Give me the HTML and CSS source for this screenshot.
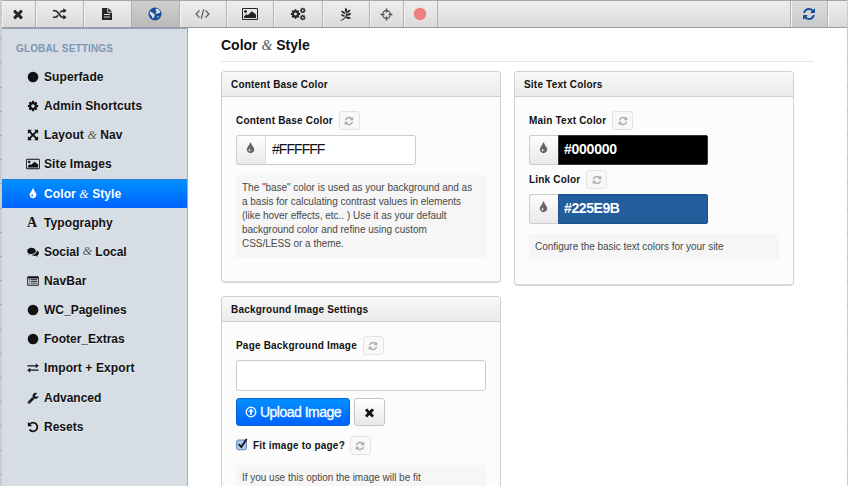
FILE: index.html
```html
<!DOCTYPE html>
<html lang="en">
<head>
<meta charset="utf-8">
<title>Color &amp; Style</title>
<link rel="stylesheet" href="styles.css">
</head>
<body>
<svg class="sprite" aria-hidden="true">
  <symbol id="close" viewBox="0 0 1792 1792"><path d="M1490 1322q0 40-28 68l-136 136q-28 28-68 28t-68-28l-294-294-294 294q-28 28-68 28t-68-28l-136-136q-28-28-28-68t28-68l294-294-294-294q-28-28-28-68t28-68l136-136q28-28 68-28t68 28l294 294 294-294q28-28 68-28t68 28l136 136q28 28 28 68t-28 68l-294 294 294 294q28 28 28 68z"/></symbol>
  <symbol id="refresh" viewBox="0 0 1792 1792"><path d="M1639 1056q0 5-1 7-64 268-268 434.500t-478 166.500q-146 0-282.500-55t-243.500-157l-129 129q-19 19-45 19t-45-19-19-45v-448q0-26 19-45t45-19h448q26 0 45 19t19 45-19 45l-137 137q71 66 161 102t187 36q134 0 250-65t186-179q11-17 53-117 8-23 30-23h192q13 0 22.500 9.500t9.500 22.500zm25-800v448q0 26-19 45t-45 19h-448q-26 0-45-19t-19-45 19-45l138-138q-148-137-349-137-134 0-250 65t-186 179q-11 17-53 117-8 23-30 23h-199q-13 0-22.500-9.500t-9.500-22.500v-7q65-268 270-434.500t480-166.500q146 0 284 55.500t245 156.500l130-129q19-19 45-19t45 19 19 45z"/></symbol>
  <symbol id="tint" viewBox="0 0 1792 1792"><path d="M896 1152q0-36-20-69-1-1-15.500-22.500t-25.500-38-25-44-21-50.500q-4-16-21-16t-21 16q-7 23-21 50.500t-25 44-25.500 38-15.500 22.500q-20 33-20 69 0 53 37.500 90.500t90.500 37.500 90.500-37.500 37.500-90.500zm512-128q0 212-150 362t-362 150-362-150-150-362q0-145 81-275 6-9 62.500-90.500t101-151 99.500-178 83-201.500q9-30 34-47t51-17 51.500 17 33.500 47q28 93 83 201.500t99.500 178 101 151 62.500 90.500q81 127 81 275z"/></symbol>
  <symbol id="picture" viewBox="-64 0 2048 1792"><path d="M576 576q0 80-56 136t-136 56-136-56-56-136 56-136 136-56 136 56 56 136zm1152 384v448h-1536v-192l320-320 160 160 512-512zm96-704h-1728q-13 0-22.500 9.500t-9.500 22.500v1216q0 13 9.500 22.500t22.500 9.500h1728q13 0 22.500-9.500t9.500-22.500v-1216q0-13-9.500-22.500t-22.500-9.500zm160 32v1216q0 66-47 113t-113 47h-1728q-66 0-113-47t-47-113v-1216q0-66 47-113t113-47h1728q66 0 113 47t47 113z"/></symbol>
  <symbol id="cog" viewBox="0 0 1792 1792"><path d="M1152 896q0-106-75-181t-181-75-181 75-75 181 75 181 181 75 181-75 75-181zm512-109v222q0 12-8 23t-20 13l-185 28q-19 54-39 91 35 50 107 138 10 12 10 25t-9 23q-27 37-99 108t-94 71q-12 0-26-9l-138-108q-44 23-91 38-16 136-29 186-7 28-36 28h-222q-14 0-24.500-8.500t-11.500-21.500l-28-184q-49-16-90-37l-141 107q-10 9-25 9-14 0-25-11-126-114-165-168-7-10-7-23 0-12 8-23 15-21 51-66.500t54-70.500q-27-50-41-99l-183-27q-13-2-21-12.500t-8-23.500v-222q0-12 8-23t19-13l186-28q14-46 39-92-40-57-107-138-10-12-10-24 0-10 9-23 26-36 98.500-107.500t94.500-71.500q13 0 26 10l138 107q44-23 91-38 16-136 29-186 7-28 36-28h222q14 0 24.500 8.500t11.500 21.500l28 184q49 16 90 37l142-107q9-9 24-9 13 0 25 10 129 119 165 170 7 8 7 22 0 12-8 23-15 21-51 66.500t-54 70.500q26 50 41 98l183 28q13 2 21 12.500t8 23.500z"/></symbol>
  <symbol id="undo" viewBox="0 0 1792 1792"><path d="M1664 896q0 156-61 298t-164 245-245 164-298 61q-172 0-327-72.500t-264-204.500q-7-10-6.500-22.500t8.500-20.500l137-138q10-9 25-9 16 2 23 12 73 95 179 147t225 52q104 0 198.500-40.500t163.500-109.500 109.500-163.500 40.500-198.500-40.500-198.500-109.500-163.500-163.500-109.500-198.500-40.500q-98 0-188 35.500t-160 101.500l137 138q31 30 14 69-17 40-59 40h-448q-26 0-45-19t-19-45v-448q0-42 40-59 39-17 69 14l130 129q107-101 244.500-156.500t284.500-55.500q156 0 298 61t245 164 164 245 61 298z"/></symbol>
  <symbol id="wrench" viewBox="0 0 1792 1792"><path d="M448 1472q0-26-19-45t-45-19-45 19-19 45 19 45 45 19 45-19 19-45zm644-420l-682 682q-37 37-90 37-52 0-91-37l-106-108q-38-36-38-90 0-53 38-91l681-681q39 98 114.500 173.500t173.500 114.500zm634-435q0 39-23 106-47 134-164.500 217.500t-258.500 83.500q-185 0-316.500-131.500t-131.500-316.500 131.500-316.500 316.500-131.500q58 0 121.500 16.500t107.500 46.500q16 11 16 28t-16 28l-293 169v224l193 107q5-3 79-48.500t135.500-81 70.500-35.500q15 0 23.500 10t8.500 25z"/></symbol>
  <symbol id="shuffle" viewBox="0 0 16 14"><path fill="none" stroke="currentColor" stroke-width="1.700" d="M1 3.500h2.500C7 3.500 8 10.500 11.500 10.500H13M1 10.500h2.500c1.300 0 2.200-1 3-2.200M8.700 5.500c.8-1.200 1.600-2 2.800-2H13"/><path d="M12 .8 15.700 3.500 12 6.200zM12 7.800l3.700 2.700L12 13.200z"/></symbol>
  <symbol id="file" viewBox="0 0 12 14"><path fill-rule="evenodd" d="M1 1h5.300v4.700H11V13H1zM3 7v1h6V7zm0 2.500v1h6v-1zM7.200 1 11 4.800H7.200z"/></symbol>
  <symbol id="globe" viewBox="0 0 14 14"><circle cx="7" cy="7" r="6.500"/><path fill="#d9e0ea" d="M7.200 2 10 1.800l2.200 2.700-.4 1.700-1.500-.4-1 1.300L7.400 6.200 8.500 4.500zM2 4.200l2.600 1.600L7 8l-.8 2L4.800 11.800 3.600 9 1.800 7zM9 9.500l2-.6-1 2z"/></symbol>
  <symbol id="code" viewBox="0 0 16 12"><path fill="none" stroke="currentColor" stroke-width="1.300" d="M4.800 2.200 1.200 6l3.600 3.800M11.200 2.200 14.800 6l-3.600 3.800M9.300 1 6.700 11"/></symbol>
  <symbol id="cogs" viewBox="0 0 16 14"><use href="#cog" x="0" y="1.500" width="11" height="11"/><use href="#cog" x="9.500" y=".2" width="6.500" height="6.500"/><use href="#cog" x="9.500" y="7.300" width="6.500" height="6.500"/></symbol>
  <symbol id="leaf" viewBox="0 0 13 14"><path d="M.8 13.300C3 12.600 5.500 11 6.300 8.500V5.600c-1.200-1.200-1.300-3-.1-5 1.600 1.400 2 3.600.9 5v2C8 6.400 9.500 5.800 11.800 6.500 11 8.200 9.200 8.900 7.200 8.700L6.700 10c1.500-.5 3.500-.3 4.800 1.300-2 1-4.200.7-5.400-.5-1.200 1.500-3 2.600-5 3zM1.600 3.800C4 3.700 5.600 5 5.900 7 3.700 6.900 2 5.700 1.600 3.800M11 2.600C10.800 4.700 9.400 6 7.400 6.100 7.500 4.200 8.800 2.900 11 2.600M1.200 7.600c2-.4 3.700.3 4.500 1.700C4.200 10 2.400 9.500 1.200 7.600"/></symbol>
  <symbol id="target" viewBox="0 0 14 14"><circle cx="7" cy="7" r="4.200" fill="none" stroke="currentColor" stroke-width="1.300"/><path d="M6.200.6h1.600v4.200H6.200zM6.200 9.200h1.600v4.200H6.200zM.6 6.200h4.200v1.600H.6zM9.200 6.200h4.200v1.600H9.200z"/></symbol>
  <symbol id="dot" viewBox="0 0 14 14"><circle cx="7" cy="7" r="6.200"/></symbol>
  <symbol id="expand" viewBox="0 0 14 14"><path d="M1 1h4.500L4.200 2.600 7 5.500l2.800-2.900L8.500 1H13v4.500l-1.500-1.300L8.600 7l2.900 2.800L13 8.500V13H8.500l1.300-1.500L7 8.600l-2.800 2.900L5.500 13H1V8.500l1.500 1.300L5.400 7 2.500 4.200 1 5.500z"/></symbol>
  <symbol id="comments" viewBox="0 0 14 14"><path d="M5.300 2C8 2 10.300 3.600 10.300 5.700S8 9.300 5.300 9.300c-.5 0-1 0-1.400-.2-.8.600-1.700 1-2.900 1 .6-.4 1-.9 1.100-1.500C.9 8 .2 6.900.2 5.700.2 3.600 2.600 2 5.300 2M11.400 5.200c1.500.6 2.500 1.700 2.500 3 0 1.100-.7 2.100-1.800 2.800.1.600.5 1 1 1.500-1.100 0-2-.4-2.800-1-1.900.3-4-.2-5.200-1.200 3.500.1 6.500-1.800 6.300-5.100"/></symbol>
  <symbol id="list" viewBox="0 0 14 12"><path fill-rule="evenodd" d="M1 .5h12l.7.700v9.600l-.7.700H1l-.7-.7V1.200zM1.300 3v7.500h11.400V3z"/><path d="M2.200 4h1v1h-1zm2 0h7.600v1H4.200zm-2 2h1v1h-1zm2 0h7.600v1H4.200zm-2 2h1v1h-1zm2 0h7.600v1H4.200z"/></symbol>
  <symbol id="exchange" viewBox="0 0 14 12"><path d="M.5 2.700h9.700V.8L13.700 3.500l-3.500 2.700V4.300H.5zM13.500 7.700H3.800V5.800L.3 8.500l3.500 2.700V9.300h9.700z"/></symbol>
  <symbol id="upload" viewBox="0 0 14 14"><circle cx="7" cy="7" r="5.500" fill="none" stroke="currentColor" stroke-width="1.700"/><path d="M7 3.200 10.300 6.700H8v3.600H6V6.700H3.700z"/></symbol>
</svg>

<div class="app">
  <header class="toolbar">
    <button class="tool w33"><svg class="i14"><use href="#close"/></svg></button>
    <button class="tool w48"><svg class="i15"><use href="#shuffle"/></svg></button>
    <button class="tool w48"><svg class="i14"><use href="#file"/></svg></button>
    <button class="tool w48 on blue"><svg class="i14"><use href="#globe"/></svg></button>
    <button class="tool w47 muted"><svg class="i15"><use href="#code"/></svg></button>
    <button class="tool w47"><svg class="i16"><use href="#picture"/></svg></button>
    <button class="tool w49"><svg class="i16"><use href="#cogs"/></svg></button>
    <button class="tool w47"><svg class="i14"><use href="#leaf"/></svg></button>
    <button class="tool w34 muted"><svg class="i13"><use href="#target"/></svg></button>
    <button class="tool w34 red"><svg class="i14"><use href="#dot"/></svg></button>
    <span class="spacer"></span>
    <button class="tool w38 sync blue"><svg class="i14"><use href="#refresh"/></svg></button>
    <span class="tail"></span>
  </header>

  <div class="columns">
    <nav class="sidebar">
      <h2>GLOBAL SETTINGS</h2>
      <a><svg><use href="#dot"/></svg>Superfade</a>
      <a><svg><use href="#cog"/></svg>Admin Shortcuts</a>
      <a><svg><use href="#expand"/></svg>Layout <i>&amp;</i> Nav</a>
      <a><svg class="wide"><use href="#picture"/></svg>Site Images</a>
      <a class="active"><svg><use href="#tint"/></svg>Color <i>&amp;</i> Style</a>
      <a><b class="glyph">A</b>Typography</a>
      <a class="tight"><svg><use href="#comments"/></svg>Social <i>&amp;</i> Local</a>
      <a><svg><use href="#list"/></svg>NavBar</a>
      <a class="tight"><svg><use href="#dot"/></svg>WC_Pagelines</a>
      <a class="tight"><svg><use href="#dot"/></svg>Footer_Extras</a>
      <a><svg><use href="#exchange"/></svg>Import + Export</a>
      <a class="tight"><svg><use href="#wrench"/></svg>Advanced</a>
      <a class="tight"><svg><use href="#undo"/></svg>Resets</a>
    </nav>

    <main>
      <h1>Color <i>&amp;</i> Style</h1>
      <div class="panels">
        <div class="stack">
          <section class="panel base">
            <h3>Content Base Color</h3>
            <div class="body">
              <div class="label"><span>Content Base Color</span><button class="mini"><svg><use href="#refresh"/></svg></button></div>
              <div class="field"><span class="addon"><svg><use href="#tint"/></svg></span><span class="value">#FFFFFF</span></div>
              <p class="help">The "base" color is used as your background and as<br>a basis for calculating contrast values in elements<br>(like hover effects, etc.. ) Use it as your default<br>background color and refine using custom<br>CSS/LESS or a theme.</p>
            </div>
          </section>
          <section class="panel image">
            <h3>Background Image Settings</h3>
            <div class="body">
              <div class="label"><span>Page Background Image</span><button class="mini"><svg><use href="#refresh"/></svg></button></div>
              <div class="blank"></div>
              <div class="actions">
                <button class="upload"><svg><use href="#upload"/></svg>Upload Image</button>
                <button class="remove"><svg><use href="#close"/></svg></button>
              </div>
              <div class="label fit"><svg class="check" viewBox="0 0 14 14"><rect x=".7" y="2.700" width="10.600" height="10.600" rx="2" fill="#a9cdf3" stroke="#5d7ba8"/><path d="M3 7.200 5.700 10.300 11.500 1.500" fill="none" stroke="#111" stroke-width="1.900"/></svg><span>Fit image to page?</span><button class="mini"><svg><use href="#refresh"/></svg></button></div>
              <p class="help">If you use this option the image will be fit</p>
            </div>
          </section>
        </div>
        <section class="panel text">
          <h3>Site Text Colors</h3>
          <div class="body">
            <div class="label"><span>Main Text Color</span><button class="mini"><svg><use href="#refresh"/></svg></button></div>
            <div class="field"><span class="addon"><svg><use href="#tint"/></svg></span><span class="value black">#000000</span></div>
            <div class="label second"><span>Link Color</span><button class="mini"><svg><use href="#refresh"/></svg></button></div>
            <div class="field"><span class="addon"><svg><use href="#tint"/></svg></span><span class="value link">#225E9B</span></div>
            <p class="help">Configure the basic text colors for your site</p>
          </div>
        </section>
      </div>
    </main>
  </div>
</div>
</body>
</html>
```
FILE: styles.css
```css
* { box-sizing: border-box; }
html, body { height: 100%; }
body {
  margin: 0;
  padding: 0 1px 0 2px;
  overflow: hidden;
  font-family: "Liberation Sans", Arial, sans-serif;
  color: #111;
  background: repeating-linear-gradient(#ccc 0 14px, #aaa 14px 15px, #ccc 15px 24.200px);
}
.sprite { position: absolute; width: 0; height: 0; }
svg { display: block; fill: currentColor; flex: none; }
button { margin: 0; padding: 0; border: 0; background: none; color: inherit; font: inherit; }
h1, h2, h3, p { margin: 0; }

.app { height: 486px; display: flex; flex-direction: column; overflow: hidden; background: #fff; }

.toolbar {
  height: 28px;
  flex: none;
  display: flex;
  border-top: 1px solid #a6a6a6;
  border-bottom: 1px solid #9c9c9c;
  background: linear-gradient(#eee, #dadada);
  color: #252525;
}
.tool {
  display: flex;
  align-items: center;
  justify-content: center;
  border-right: 1px solid #b2b2b2;
  box-shadow: inset 1px 0 #f4f4f4;
}
.tool svg { margin-right: 1px; }
.tool.on { background: linear-gradient(#cfcfcf, #bababa); box-shadow: none; }
.blue { color: #174f9b; }
.muted { color: #555; }
.red { color: #f08080; }
.w33 { width: 34px; }
.w34 { width: 34px; }
.w38 { width: 38px; }
.w47 { width: 47px; }
.w48 { width: 48px; }
.w49 { width: 49px; }
.i13 { width: 13px; height: 13px; }
.i14 { width: 14px; height: 14px; }
.i15 { width: 15px; height: 14px; }
.i16 { width: 16px; height: 14px; }
.spacer { flex: 1; }
.sync { border-left: 1px solid #b2b2b2; background: linear-gradient(#ddd, #cacaca); }
.tail { width: 19px; border-left: 1px solid #f8f8f8; }

.columns { flex: 1; min-height: 0; display: flex; overflow: hidden; }
.sidebar {
  width: 186px;
  flex: none;
  background: #d6dde5;
  border-top: 1px solid #8ea3be;
  border-right: 1px solid #9aacc3;
}
.sidebar h2 {
  height: 33.500px;
  padding-left: 14px;
  font-size: 10px;
  line-height: 39px;
  letter-spacing: .15px;
  color: #7e97b6;
}
.sidebar a {
  height: 29.150px;
  display: flex;
  align-items: center;
  padding-left: 25px;
  font-size: 12px;
  font-weight: bold;
  letter-spacing: .1px;
  white-space: pre;
  text-shadow: 0 1px rgba(255, 255, 255, .5);
}
.sidebar .tight { letter-spacing: 0; }
.sidebar svg, .glyph { width: 12px; height: 12px; margin-right: 5px; }
.sidebar .wide { width: 14px; margin-left: -1px; margin-right: 4px; }
.glyph { font: bold 14px/12px "Liberation Serif", serif; }
i { font-family: "Liberation Serif", serif; font-style: italic; font-weight: normal; color: #555; }
.sidebar .active {
  color: #fff;
  text-shadow: none;
  border-top: 1px solid #2c78d8;
  background: linear-gradient(#0090ff, #0062ff);
}
.active i { color: #fff; }

main { flex: 1; padding: 0 33px 0 33px; }
h1 {
  height: 34px;
  border-bottom: 1px solid #e4e4e4;
  font-size: 14px;
  line-height: 35px;
}
.panels { display: flex; align-items: flex-start; gap: 13px; padding-top: 9px; }
.stack { display: flex; flex-direction: column; gap: 13px; }
.panel {
  width: 280px;
  border: 1px solid #d0d0d0;
  border-bottom-width: 2px;
  border-bottom-color: #d8d8d8;
  border-radius: 4px;
  background: #fcfcfc;
}
.base { height: 212px; }
.image { height: 260px; }
.text { height: 215px; }
.panel h3 {
  height: 25px;
  padding-left: 9px;
  border-bottom: 1px solid #cfcfcf;
  border-radius: 3px 3px 0 0;
  background: linear-gradient(#f8f8f8, #ebebeb);
  font-size: 10px;
  line-height: 25px;
  letter-spacing: .2px;
}
.body { padding: 14px 14px 0; }
.label {
  height: 19px;
  display: flex;
  align-items: center;
  gap: 6px;
  margin-bottom: 5px;
  font-size: 10px;
  font-weight: bold;
  letter-spacing: .2px;
}
.label span { margin-top: -1px; }
.mini {
  width: 21px;
  height: 19px;
  display: flex;
  align-items: center;
  justify-content: center;
  border: 1px solid #e3e3e3;
  border-radius: 3px;
  background: #f8f8f8;
  color: #aaa;
}
.mini svg { width: 10px; height: 10px; }
.field { width: 180px; height: 30px; display: flex; }
.addon {
  width: 29px;
  display: flex;
  align-items: center;
  justify-content: center;
  border: 1px solid #ccc;
  border-right: 0;
  border-radius: 3px 0 0 3px;
  background: linear-gradient(#fdfdfd, #e9e9e9);
  color: #666;
}
.addon svg { width: 13px; height: 13px; margin: 0 1px 3px 0; }
.value {
  flex: 1;
  padding-left: 6px;
  border: 1px solid #ccc;
  border-left-color: #ddd;
  border-radius: 0 3px 3px 0;
  background: #fff;
  font-size: 14px;
  line-height: 27px;
  letter-spacing: -1px;
}
.value { letter-spacing: -.95px; }
.value.black, .value.link {
  margin-right: 1px;
  padding-left: 5px;
  border-color: #333;
  border-radius: 0 2px 2px 0;
  color: #fff;
  font-weight: bold;
  letter-spacing: -.25px;
}
.value.black { background: #000; }
.value.link { background: #225e9b; border-color: #1d528a; letter-spacing: -.4px; }
.label.second { margin-top: 5px; }
.help {
  margin-top: 10px;
  padding: 6px 6px 7px;
  background: #f6f6f6;
  color: #484848;
  font-size: 10px;
  line-height: 14px;
  letter-spacing: -.02px;
  white-space: nowrap;
}
.blank { height: 31px; border: 1px solid #ccc; border-radius: 3px; background: #fff; }
.actions { display: flex; gap: 4px; margin-top: 7px; }
.upload {
  width: 114px;
  height: 28px;
  display: flex;
  align-items: center;
  justify-content: center;
  gap: 3px;
  border: 1px solid #0a62d8;
  border-radius: 3px;
  background: linear-gradient(#0090ff, #0062ff);
  color: #fff;
  font-size: 14px;
  letter-spacing: -.5px;
  -webkit-text-stroke: .3px #fff;
}
.upload svg { width: 12px; height: 12px; }
.remove {
  width: 31px;
  height: 28px;
  display: flex;
  align-items: center;
  justify-content: center;
  border: 1px solid #c4c4c4;
  border-radius: 3px;
  background: linear-gradient(#fff, #e8e8e8);
}
.remove svg { width: 13px; height: 13px; }
.fit { margin-top: 10px; gap: 5px; }
.check { width: 13px; height: 14px; margin-right: -1px; margin-top: -3px; }
```
